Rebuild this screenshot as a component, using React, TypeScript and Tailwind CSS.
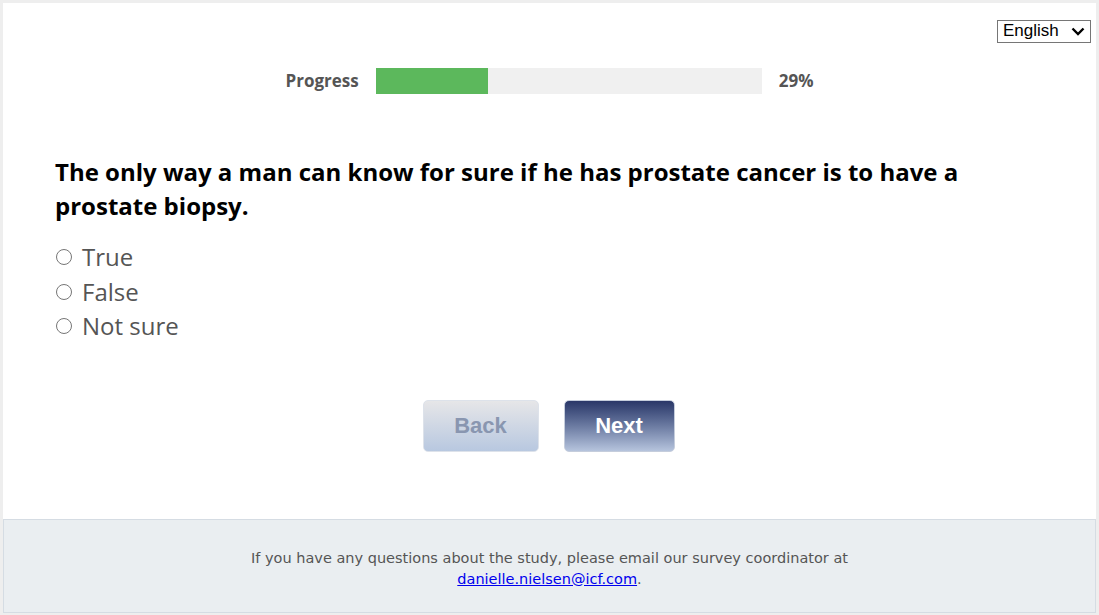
import React from "react";

export default function App() {
  const options = ["True", "False", "Not sure"];
  const pct = 29;
  return (
    <div className="h-[615px] bg-[#eeeeee] px-[3px] pt-[3px] pb-[2px] overflow-hidden">
      <div className="flex h-[610px] flex-col bg-white">
        <div className="flex-1">
          <div className="flex justify-end pr-[5px] pt-[17px]">
            <div className="relative flex h-[23px] w-[94px] items-start border border-[#767676] bg-white">
              <select
                className="h-[19px] w-full appearance-none bg-transparent pl-[5px] text-[17px] leading-[19px] text-black outline-none"
                style={{ fontFamily: "'Liberation Sans', Arial, sans-serif" }}
                defaultValue="English"
              >
                <option>English</option>
              </select>
              <svg
                className="pointer-events-none absolute right-[5px] top-[6px]"
                width="14"
                height="9"
                viewBox="0 0 14 9"
              >
                <path d="M1.5 1.5 L7 7 L12.5 1.5" fill="none" stroke="#000" strokeWidth="2.4" />
              </svg>
            </div>
          </div>
          <div
            className="mt-[25px] flex items-center justify-center gap-[17px] text-[17px] font-bold text-[#555555]"
            style={{ fontFamily: "'Open Sans', sans-serif" }}
          >
            <span>Progress</span>
            <div className="h-[26px] w-[386px] bg-[#f0f0f0]">
              <div className="h-full bg-[#5cb85c]" style={{ width: `${pct}%` }} />
            </div>
            <span>{pct}%</span>
          </div>
          <div className="pl-[52px] pr-[60px]" style={{ fontFamily: "'Open Sans', sans-serif" }}>
            <h1 className="mt-[61px] max-w-[930px] text-[24px] font-bold leading-[34px] text-black">
              The only way a man can know for sure if he has prostate cancer is to have a prostate biopsy.
            </h1>
            <div className="mt-[17px] flex flex-col">
              {options.map((o) => (
                <label key={o} className="flex h-[34.5px] items-center text-[24px] text-[#555555]">
                  <span className="ml-[1px] mr-[10px] inline-block h-[16px] w-[16px] rounded-full border border-[#767676] bg-white" />
                  {o}
                </label>
              ))}
            </div>
          </div>
          <div
            className="mt-[56px] flex justify-center gap-[25px] pr-[2px]"
            style={{ fontFamily: "'Liberation Sans', Arial, sans-serif" }}
          >
            <button className="h-[52px] w-[116px] rounded-[5px] border border-[#dde2ea] bg-gradient-to-b from-[#e6e6e8] to-[#b8c8e0] text-[22px] font-bold text-[#8996b0]">
              Back
            </button>
            <button className="h-[52px] w-[111px] rounded-[5px] border border-[#c5cddc] bg-gradient-to-b from-[#2a3768] to-[#b6c4dd] text-[22px] font-bold text-white">
              Next
            </button>
          </div>
        </div>
        <footer
          className="flex h-[94px] flex-col items-center justify-center border border-[#d5dce3] bg-[#eaeef1] pt-[5px] text-center text-[14.5px] leading-[21px] text-[#555555]"
          style={{ fontFamily: "'DejaVu Sans', Tahoma, sans-serif" }}
        >
          <span>If you have any questions about the study, please email our survey coordinator at</span>
          <span>
            <a href="#" className="text-[#0000ee] underline">
              danielle.nielsen@icf.com
            </a>
            .
          </span>
        </footer>
      </div>
    </div>
  );
}
